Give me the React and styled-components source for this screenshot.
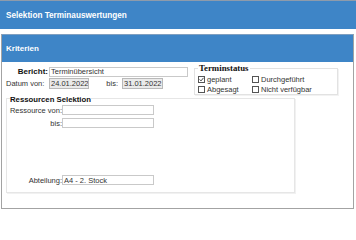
import React from "react";
import styled, { createGlobalStyle } from "styled-components";

const Global = createGlobalStyle`
  html, body { margin: 0; padding: 0; background: #fff; }
  body { font-family: "Liberation Sans", Arial, sans-serif; width: 356px; height: 211px; overflow: hidden; }
  * { box-sizing: border-box; }
`;

const BLUE = "#3e85c7";

const Page = styled.div`
  display: flex;
  flex-direction: column;
  width: 356px;
`;

const TitleBar = styled.div`
  height: 29px;
  background: ${BLUE};
  border-top: 1px solid #8e9bab;
  display: flex;
  align-items: center;
  padding: 1px 0 0 6px;
  color: #fff;
  font-weight: bold;
  font-size: 8.2px;
`;

const Panel = styled.section`
  margin: 5px 0 0 1px;
  width: 353px;
  border: 1px solid #a3a3a3;
  border-top-color: #7f9fc0;
  display: flex;
  flex-direction: column;
`;

const PanelHeader = styled.div`
  height: 27px;
  background: ${BLUE};
  color: #fff;
  font-weight: bold;
  font-size: 8px;
  display: flex;
  align-items: center;
  padding-left: 4px;
`;

const PanelBody = styled.div`
  height: 146px;
  background: #fff;
  display: flex;
  flex-direction: column;
  padding-left: 4px;
`;

const TopSection = styled.div`
  display: flex;
  align-items: flex-start;
  padding-top: 2px;
`;

const LeftCol = styled.div`
  display: flex;
  flex-direction: column;
  gap: 1px;
  margin-top: 2px;
`;

const Row = styled.div`
  display: flex;
  align-items: center;
  height: ${(p) => p.$h || 11}px;
`;

const Label = styled.span`
  width: ${(p) => p.$w}px;
  flex: none;
  text-align: ${(p) => p.$align || "right"};
  font-size: ${(p) => (p.$bold ? 8 : 7.5)}px;
  font-weight: ${(p) => (p.$bold ? "bold" : "normal")};
  color: ${(p) => (p.$bold ? "#111" : "#333")};
  padding-right: ${(p) => p.$pr || 0}px;
  margin-left: ${(p) => p.$ml || 0}px;
  white-space: nowrap;
`;

const Field = styled.div`
  width: ${(p) => p.$w}px;
  height: ${(p) => p.$h || 10}px;
  flex: none;
  border: 1px solid ${(p) => (p.$date ? "#b9b9b9" : "#c9c9c9")};
  background: ${(p) => (p.$date ? "#eaeaea" : "#fff")};
  font-size: 7.5px;
  color: #333;
  display: flex;
  align-items: center;
  padding-left: 1px;
  white-space: nowrap;
  overflow: hidden;
`;

const StatusSet = styled.fieldset`
  margin: 0 0 0 6px;
  width: 144px;
  border: 1px solid #e2e2e2;
  box-shadow: 1px 1px 0 #f2f2f2;
  padding: 0 3px 0 3px;
  min-width: 0;
`;

const StatusLegend = styled.legend`
  font-family: "Liberation Serif", "Times New Roman", serif;
  font-weight: bold;
  font-size: 8.8px;
  line-height: 9px;
  padding: 0 1px;
  color: #111;
`;

const CheckGrid = styled.div`
  display: grid;
  grid-template-columns: 54px auto;
  grid-auto-rows: 10px;
  margin-top: 1px;
`;

const CheckItem = styled.label`
  display: flex;
  align-items: center;
  gap: 2px;
  font-size: 7.5px;
  color: #333;
  white-space: nowrap;
`;

const Box = styled.span`
  width: 7px;
  height: 7px;
  border: 1px solid #555;
  background: #fff;
  display: inline-flex;
  align-items: center;
  justify-content: center;
  flex: none;
`;

const Check = ({ checked, children }) => (
  <CheckItem>
    <Box>
      {checked && (
        <svg width="5" height="5" viewBox="0 0 5 5">
          <path d="M0.6 2.4 L2 3.9 L4.5 0.8" fill="none" stroke="#333" strokeWidth="0.9" />
        </svg>
      )}
    </Box>
    {children}
  </CheckItem>
);

const ResSet = styled.fieldset`
  margin: -2px 0 0 0;
  width: 289px;
  border: 1px solid #e6e6e6;
  box-shadow: 1px 1px 0 #f1f1f1;
  padding: 0 0 7px 0;
  min-width: 0;
  display: flex;
  flex-direction: column;
`;

const ResLegend = styled.legend`
  font-weight: bold;
  font-size: 7.75px;
  line-height: 8px;
  padding: 3px 0 0 0;
  margin-left: 3px;
  color: #111;
`;

const ResRows = styled.div`
  display: flex;
  flex-direction: column;
  gap: 3px;
  margin-top: 1px;
`;

const Spacer = styled.div`
  height: ${(p) => p.$h}px;
`;

export default function App() {
  return (
    <>
      <Global />
      <Page>
        <TitleBar>Selektion Terminauswertungen</TitleBar>
        <Panel>
          <PanelHeader>Kriterien</PanelHeader>
          <PanelBody>
            <TopSection>
              <LeftCol>
                <Row>
                  <Label $w={43} $bold $pr={1}>Bericht:</Label>
                  <Field $w={139}>Terminübersicht</Field>
                </Row>
                <Row>
                  <Label $w={43} $align="left">Datum von:</Label>
                  <Field $w={40} $h={11} $date>24.01.2022</Field>
                  <Label $w={17} $ml={16} $pr={4}>bis:</Label>
                  <Field $w={41} $h={11} $date>31.01.2022</Field>
                </Row>
              </LeftCol>
              <StatusSet>
                <StatusLegend>Terminstatus</StatusLegend>
                <CheckGrid>
                  <Check checked>geplant</Check>
                  <Check>Durchgeführt</Check>
                  <Check>Abgesagt</Check>
                  <Check>Nicht verfügbar</Check>
                </CheckGrid>
              </StatusSet>
            </TopSection>
            <ResSet>
              <ResLegend>Ressourcen Selektion</ResLegend>
              <ResRows>
                <Row $h={10}>
                  <Label $w={55}>Ressource von:</Label>
                  <Field $w={92} $h={10} />
                </Row>
                <Row $h={10}>
                  <Label $w={55}>bis:</Label>
                  <Field $w={92} $h={10} />
                </Row>
              </ResRows>
              <Spacer $h={47} />
              <Row $h={10}>
                <Label $w={55}>Abteilung:</Label>
                <Field $w={92} $h={10}>A4 - 2. Stock</Field>
              </Row>
            </ResSet>
          </PanelBody>
        </Panel>
      </Page>
    </>
  );
}
